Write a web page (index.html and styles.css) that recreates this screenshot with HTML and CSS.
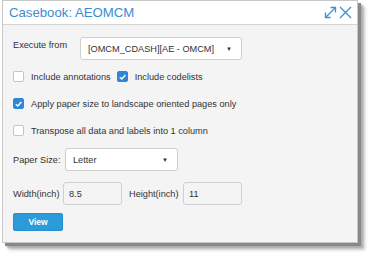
FILE: index.html
```html
<!DOCTYPE html>
<html lang="en">
<head>
    <meta charset="UTF-8">
    <title>Casebook: AEOMCM</title>
    <link rel="stylesheet" href="styles.css">
</head>
<body>
    <div class="dialog">
        <div class="dialog-header">
            <span class="dialog-title">Casebook: AEOMCM</span>
            <div class="header-icons">
                <svg width="13" height="13" viewBox="0 0 13 13" fill="none" stroke="#3d8fd9" stroke-width="1.3">
                    <path d="M1.5 11.5 L11.5 1.5"/>
                    <path d="M6.5 1.5 H11.5 V6.5"/>
                    <path d="M1.5 6.5 V11.5 H6.5"/>
                </svg>
                <svg width="13" height="13" viewBox="0 0 13 13" fill="none" stroke="#3d8fd9" stroke-width="1.3">
                    <path d="M1 1 L12 12 M12 1 L1 12"/>
                </svg>
            </div>
        </div>
        <div class="dialog-body">
            <div class="row">
                <label class="field-label exec-label">Execute from</label>
                <div class="select exec-select">
                    <span>[OMCM_CDASH][AE - OMCM]</span>
                    <span class="caret">&#9660;</span>
                </div>
            </div>
            <div class="row check-row">
                <span class="checkbox"></span>
                <span class="check-text">Include annotations</span>
                <span class="checkbox checked"><svg width="10" height="10" viewBox="0 0 10 10"><path d="M2 5.2 L4.2 7.3 L8.2 2.8" fill="none" stroke="#fff" stroke-width="1.6"/></svg></span>
                <span class="check-text">Include codelists</span>
            </div>
            <div class="row check-row">
                <span class="checkbox checked"><svg width="10" height="10" viewBox="0 0 10 10"><path d="M2 5.2 L4.2 7.3 L8.2 2.8" fill="none" stroke="#fff" stroke-width="1.6"/></svg></span>
                <span class="check-text">Apply paper size to landscape oriented pages only</span>
            </div>
            <div class="row check-row">
                <span class="checkbox"></span>
                <span class="check-text">Transpose all data and labels into 1 column</span>
            </div>
            <div class="row paper-row">
                <label class="field-label paper-label">Paper Size:</label>
                <div class="select paper-select">
                    <span>Letter</span>
                    <span class="caret">&#9660;</span>
                </div>
            </div>
            <div class="row size-row">
                <label class="field-label width-label">Width(inch)</label>
                <div class="input">8.5</div>
                <label class="field-label height-label">Height(inch)</label>
                <div class="input">11</div>
            </div>
            <button class="view-btn">View</button>
        </div>
    </div>
</body>
</html>
```

FILE: styles.css
```css
* {
    margin: 0;
    padding: 0;
    box-sizing: border-box;
}

body {
    font-family: 'Liberation Sans', Arial, sans-serif;
    background: #ffffff;
    width: 372px;
    height: 257px;
    overflow: hidden;
    padding: 0 0 0 2px;
}

.dialog {
    width: 356px;
    height: 243px;
    border: 1px solid #c8c8c8;
    background: #f4f4f4;
    box-shadow: 3px 3px 0 #888, 5px 5px 2px #aaa, 7px 7px 3px #ccc;
    display: flex;
    flex-direction: column;
}

.dialog-header {
    height: 24px;
    background: #fff;
    border-bottom: 1px solid #d4d4d4;
    display: flex;
    align-items: center;
    justify-content: space-between;
    padding: 0 5px 0 6px;
}

.dialog-title {
    font-size: 13.2px;
    color: #3a8cd4;
}

.header-icons {
    display: flex;
    gap: 2px;
    align-items: center;
}

.dialog-body {
    padding: 12px 10px 0 10px;
    font-size: 9.2px;
    color: #333;
    white-space: nowrap;
}

.row {
    display: flex;
    align-items: center;
}

.field-label {
    color: #333;
}

.exec-label {
    width: 67px;
    align-self: flex-start;
    margin-top: 3px;
}

.select {
    height: 23px;
    background: #fff;
    border: 1px solid #cfcfcf;
    border-radius: 3px;
    display: flex;
    align-items: center;
    justify-content: space-between;
    padding: 0 9px 0 7px;
    color: #333;
}

.exec-select {
    width: 162px;
}

.caret {
    font-size: 6px;
}

.check-row {
    height: 27px;
}

.check-row:nth-child(2) {
    margin-top: 3px;
}

.checkbox {
    width: 11px;
    height: 11px;
    border: 1px solid #c4c4c4;
    border-radius: 2px;
    background: #fff;
    margin-right: 7px;
    display: flex;
    align-items: center;
    justify-content: center;
}

.checkbox.checked {
    background: #2d86d6;
    border-color: #2d86d6;
}

.check-text {
    margin-right: 6px;
}

.paper-row {
    margin-top: 4px;
}

.paper-label {
    width: 52px;
}

.paper-select {
    width: 113px;
}

.size-row {
    margin-top: 11px;
}

.width-label {
    width: 50px;
}

.height-label {
    width: 54px;
    margin-left: 7px;
}

.input {
    width: 59px;
    height: 23px;
    border: 1px solid #d0d0d0;
    border-radius: 3px;
    background: #f4f4f4;
    display: flex;
    align-items: center;
    padding-left: 5px;
}

.view-btn {
    margin-top: 8px;
    width: 50px;
    height: 18px;
    background: #2b9bd9;
    border: 1px solid #2490cd;
    border-radius: 2px;
    color: #fff;
    font-family: 'Liberation Sans', Arial, sans-serif;
    font-weight: bold;
    font-size: 8.5px;
}
```
